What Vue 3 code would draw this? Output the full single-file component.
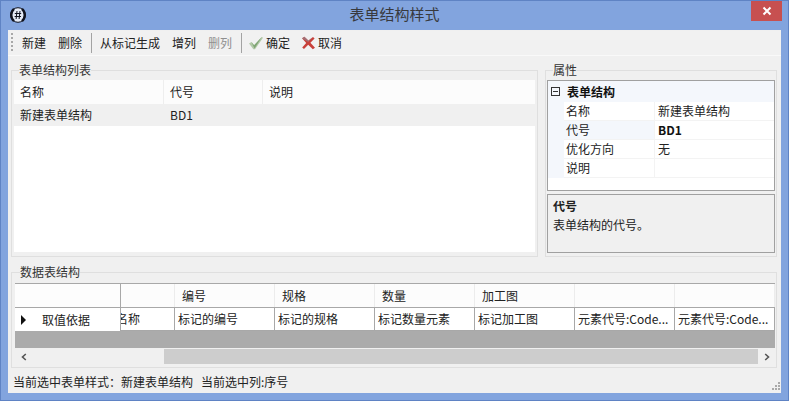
<script setup>
const tools = [
  { t: '新建', w: 36 }, { t: '删除', w: 36 }, { sep: true },
  { t: '从标记生成', w: 72 }, { t: '增列', w: 36 }, { t: '删列', w: 36, off: true }, { sep: true }
]
const props = [
  { k: '名称', v: '新建表单结构' },
  { k: '代号', v: 'BD1', sel: true },
  { k: '优化方向', v: '无' },
  { k: '说明', v: '' }
]
const cols = [
  { w: 100, h: '编号', c: '标记的编号' },
  { w: 100, h: '规格', c: '标记的规格' },
  { w: 100, h: '数量', c: '标记数量元素' },
  { w: 100, h: '加工图', c: '标记加工图' },
  { w: 100, h: '', c: '元素代号:Code...' },
  { w: 100, h: '', c: '元素代号:Code...' }
]
</script>

<template>
  <div class="win">
    <header class="title">
      <svg class="logo" width="18" height="18" viewBox="0 0 18 18">
        <circle cx="9" cy="9" r="7.300" fill="#e4eaf6" stroke="#10131f" stroke-width="1" />
        <path d="M5 2.800C1.300 6.200 1.300 11.800 5 15.200M13 2.800c3.700 3.400 3.700 9 0 12.400" stroke="#10131f" stroke-width="2.400" fill="none" />
        <path d="M8 5 7.100 13M11 5l-.9 8M5.800 7.500h6.400M5.600 10.500h6.400" stroke="#10131f" stroke-width="1" fill="none" />
      </svg>
      <span class="title-text">表单结构样式</span>
      <button class="close" type="button">
        <svg width="10" height="10" viewBox="0 0 10 10"><path d="M1.500 1.500l7 7M8.500 1.500l-7 7" stroke="#fff" stroke-width="2" /></svg>
      </button>
    </header>

    <div class="body">
      <div class="toolbar">
        <i class="grip"></i>
        <template v-for="(b, i) in tools" :key="i">
          <i v-if="b.sep" class="sep"></i>
          <span v-else class="tool" :class="{ off: b.off }" :style="{ width: b.w + 'px' }">{{ b.t }}</span>
        </template>
        <span class="tool ico ok">
          <svg width="16" height="14" viewBox="0 0 16 14"><path d="M1 7.500 3.500 6l2.600 3.200L13.800 1l1.200.8L7 13.200H5.400z" fill="#b2c9a8" /><path d="M3.500 6l2.600 3.200L13.800 1 6.500 12.600z" fill="#7fa574" /></svg>
          确定
        </span>
        <span class="tool ico">
          <svg width="15" height="14" viewBox="0 0 15 14"><path d="M1 2.200 3.400.8l4 3.600L12 1l1.600 1.400L9.400 6.800l4.600 5-2.200 1.400L7.200 8.800 3 13 1.200 11.600l4-4.600z" fill="#c8403a" /><path d="M1 2.200 3.400.8l4 3.600L12 1 7.200 6z" fill="#8b8f9c" opacity=".6" /></svg>
          取消
        </span>
      </div>

      <div class="upper">
        <fieldset class="group list">
          <legend>表单结构列表</legend>
          <div class="table">
            <div class="row head"><span class="c1">名称</span><span class="c2">代号</span><span class="c3">说明</span></div>
            <div class="row cur"><span class="c1">新建表单结构</span><span class="c2">BD1</span><span class="c3"></span></div>
          </div>
        </fieldset>

        <fieldset class="group attr">
          <legend>属性</legend>
          <div class="pgrid">
            <div class="cat"><i class="minus"></i><b>表单结构</b></div>
            <div v-for="p in props" :key="p.k" class="prop">
              <span class="gutter"></span>
              <span class="pk" :class="{ selk: p.sel }">{{ p.k }}</span>
              <span class="pv" :class="{ bold: p.sel }">{{ p.v }}</span>
            </div>
          </div>
          <div class="desc"><b>代号</b><span>表单结构的代号。</span></div>
        </fieldset>
      </div>

      <fieldset class="group data">
        <legend>数据表结构</legend>
        <div class="dgrid">
          <div class="drow dhead">
            <span class="dlead"></span>
            <span v-for="(c, i) in cols" :key="i" class="dh" :style="{ width: c.w + 'px' }">{{ c.h }}</span>
          </div>
          <div class="drow dbody">
            <span class="dlead"><span class="clip">名称</span></span>
            <span v-for="(c, i) in cols" :key="i" class="dc" :style="{ width: c.w + 'px' }">{{ c.c }}</span>
          </div>
          <div class="empty"></div>
          <div class="frozen">
            <div class="fhead"></div>
            <div class="fbody"><i class="arrow"></i><span>取值依据</span></div>
          </div>
        </div>
        <div class="hbar">
          <span class="sbtn"><svg width="8" height="8" viewBox="0 0 8 8"><path d="M5.800 1 2.500 4l3.300 3" fill="none" stroke="#555" stroke-width="1.600" /></svg></span>
          <div class="track"><div class="thumb"></div></div>
          <span class="sbtn"><svg width="8" height="8" viewBox="0 0 8 8"><path d="M2.200 1 5.500 4 2.200 7" fill="none" stroke="#555" stroke-width="1.600" /></svg></span>
        </div>
      </fieldset>

      <footer class="status">
        <span>当前选中表单样式：新建表单结构</span>
        <span>当前选中列:序号</span>
        <svg class="sizer" width="12" height="12" viewBox="0 0 12 12" fill="#a9a9a9">
          <rect x="9" y="1" width="2" height="2" /><rect x="6" y="4" width="2" height="2" /><rect x="9" y="4" width="2" height="2" />
          <rect x="3" y="7" width="2" height="2" /><rect x="6" y="7" width="2" height="2" /><rect x="9" y="7" width="2" height="2" />
        </svg>
      </footer>
    </div>
  </div>
</template>

<style>
html, body { margin: 0; background: #82a4de; }
</style>

<style scoped>
.win {
  width: 789px;
  height: 401px;
  box-sizing: border-box;
  display: flex;
  flex-direction: column;
  background: #82a4de;
  border: 1px solid #5f83c4;
  font: 12px/16px "Noto Sans CJK SC", "Liberation Sans", sans-serif;
  color: #222;
  overflow: hidden;
}
.title {
  height: 29px;
  flex: none;
  box-sizing: border-box;
  padding-bottom: 3px;
  display: flex;
  align-items: center;
  justify-content: center;
  position: relative;
}
.logo { position: absolute; left: 8px; top: 5px; }
.title-text { font-size: 15px; color: #38393d; }
.close {
  position: absolute;
  right: 6px;
  top: 0;
  width: 31px;
  height: 20px;
  padding: 0;
  border: 0;
  background: #c75050;
  display: flex;
  align-items: center;
  justify-content: center;
}
.body {
  flex: 1;
  margin: 0 7px 7px;
  background: #f0f0f0;
  display: flex;
  flex-direction: column;
  min-height: 0;
}
.toolbar {
  height: 24px;
  flex: none;
  display: flex;
  align-items: center;
  padding-left: 3px;
  background: #f1f1f1;
  border-bottom: 1px solid #f9f9f9;
  margin-top: 1px;
}
.grip {
  width: 2px;
  height: 20px;
  margin-right: 3px;
  background: repeating-linear-gradient(#a8a8a8 0 2px, transparent 2px 4px);
}
.tool { text-align: center; flex: none; }
.tool.off { color: #8f8f8f; }
.sep { width: 1px; height: 20px; background: #a3a3a3; margin: 0 2px 0 3px; flex: none; }
.ico { display: flex; align-items: center; gap: 2px; margin-left: 2px; margin-right: 9px; }
.ok { margin-left: 4px; }
.upper {
  display: flex;
  gap: 7px;
  margin: 7px 4px 0 3px;
  height: 194px;
  flex: none;
}
.group {
  min-width: 0;
  margin: 0;
  padding: 0 2px 1px;
  border: 1px solid #dfdfdf;
  box-sizing: border-box;
}
legend {
  padding: 0;
  margin-left: 5px;
  line-height: 14px;
  color: #333;
}
.attr legend { margin-left: 6px; }
.list { width: 527px; }
.attr { width: 232px; padding-left: 1px; padding-right: 1px; }
.table { background: #fff; height: 172px; margin-top: 3px; }
.row { display: flex; }
.head { height: 24px; line-height: 24px; background: #fcfcfc; }
.cur { height: 22px; line-height: 22px; background: #f0f0f0; }
.row span { box-sizing: border-box; padding-left: 6px; }
.c1 { width: 150px; }
.c2 { width: 99px; }
.c3 { flex: 1; }
.head .c1, .head .c2 { border-right: 1px solid #eeeeee; }
.pgrid {
  height: 111px;
  box-sizing: border-box;
  margin-top: 3px;
  background: #fff;
  border: 1px solid #a0a0a0;
  overflow: hidden;
}
.cat {
  height: 21px;
  display: flex;
  align-items: center;
  background: #f4f7fc;
  color: #111;
}
.minus {
  width: 9px;
  height: 9px;
  box-sizing: border-box;
  margin: 0 7px 0 3px;
  border: 1px solid #333;
  background: linear-gradient(#333, #333) center / 5px 1px no-repeat;
}
.prop { display: flex; height: 19px; line-height: 18px; }
.gutter { width: 16px; background: #f4f7fc; flex: none; }
.pk { width: 91px; flex: none; box-sizing: border-box; padding-left: 2px; border-right: 1px solid #f3f3f3; border-bottom: 1px solid #f3f3f3; }
.selk { background: #f4f7fc; }
.pv { flex: 1; padding-left: 3px; border-bottom: 1px solid #f3f3f3; }
.bold { font-weight: 700; color: #111; }
.desc {
  height: 59px;
  box-sizing: border-box;
  margin-top: 3px;
  padding: 1px 5px;
  border: 1px solid #a0a0a0;
  background: #f0f0f0;
  display: flex;
  flex-direction: column;
  line-height: 19px;
}
.data {
  height: 103px;
  flex: none;
  margin: 8px 4px 0 3px;
  padding: 0 1px 0 3px;
}
.dgrid { position: relative; height: 65px; margin-top: 4px; background: #ababab; overflow: hidden; border-top: 1px solid #a8a8a8; box-sizing: border-box; }
.drow { display: flex; }
.dhead { background: #fcfcfc; height: 23px; }
.dbody { background: #fff; border-top: 1px solid #a8a8a8; border-bottom: 1px solid #a8a8a8; box-sizing: border-box; height: 24px; line-height: 21px; }
.dlead { width: 160px; flex: none; box-sizing: border-box; border-right: 1px solid #a8a8a8; position: relative; overflow: hidden; }
.dhead .dlead { border-right-color: #ececec; }
.clip { position: absolute; left: 101px; top: 0; width: 30px; white-space: nowrap; }
.dh, .dc { flex: none; box-sizing: border-box; white-space: nowrap; overflow: hidden; }
.dh { line-height: 23px; padding-left: 7px; border-right: 1px solid #ececec; }
.dc { padding-left: 3px; border-right: 1px solid #a8a8a8; }
.empty { height: 17px; }
.frozen { position: absolute; left: 0; top: 0; width: 106px; height: 47px; background: #fff; border-right: 1px solid #a8a8a8; box-sizing: border-box; }
.fhead { height: 23px; border-bottom: 1px solid #a8a8a8; background: #fdfdfd; }
.fbody { height: 23px; display: flex; align-items: center; }
.arrow { width: 0; height: 0; margin-left: 6px; border-left: 5px solid #111; border-top: 5px solid transparent; border-bottom: 5px solid transparent; }
.fbody span { margin-left: 16px; }
.hbar { display: flex; height: 15px; align-items: stretch; background: #f0f0f0; margin-top: 1px; }
.sbtn { width: 17px; flex: none; display: flex; align-items: center; justify-content: center; }
.track { flex: 1; position: relative; display: flex; }
.thumb { margin-left: 132px; flex: 1; background: #cdcdcd; }
.status {
  flex: 1;
  display: flex;
  align-items: center;
  gap: 8px;
  padding: 2px 0 0 5px;
  position: relative;
  color: #222;
}
.sizer { position: absolute; right: 0; bottom: 0; }
</style>
